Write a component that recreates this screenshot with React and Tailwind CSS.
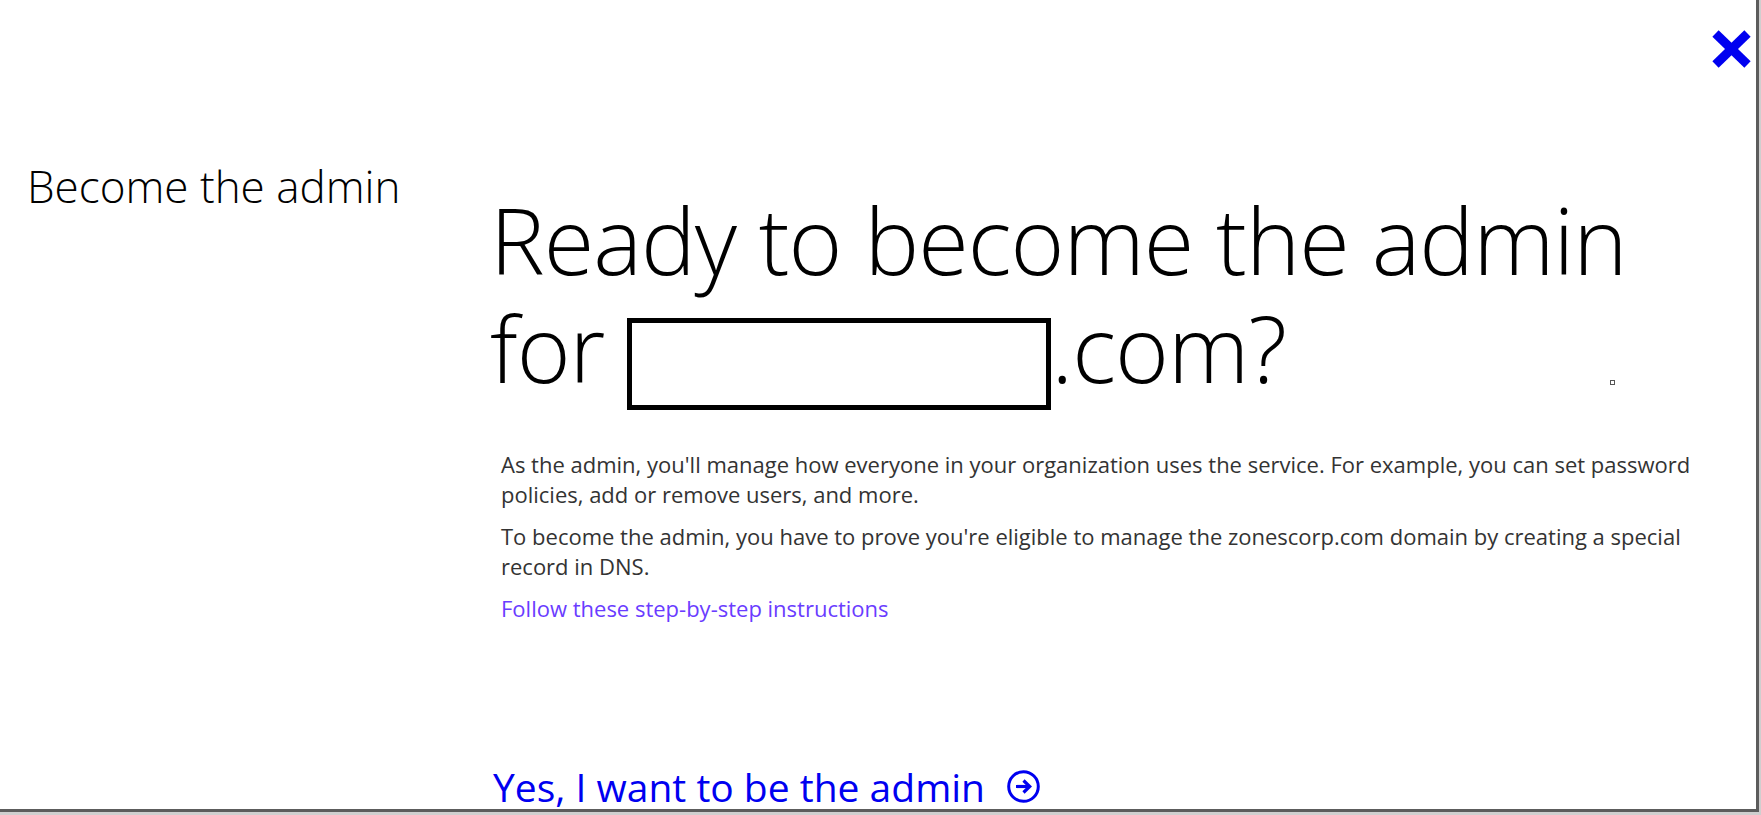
import React from "react";

const CloseIcon = () => (
  <svg width="39" height="38" viewBox="0 0 39 38" fill="none">
    <line x1="3.5" y1="3.5" x2="35.5" y2="34.5" stroke="#0000f0" strokeWidth="9" />
    <line x1="35.5" y1="3.5" x2="3.5" y2="34.5" stroke="#0000f0" strokeWidth="9" />
  </svg>
);

const ArrowCircle = () => (
  <svg width="33" height="33" viewBox="0 0 33 33" fill="none">
    <circle cx="16.5" cy="16.5" r="14.8" stroke="#0000f0" strokeWidth="3" />
    <path d="M9 16.5h13" stroke="#0000f0" strokeWidth="3.2" />
    <path d="M16.5 10.5l6.2 6-6.2 6" stroke="#0000f0" strokeWidth="3.2" />
  </svg>
);

const App = () => {
  return (
    <div className="w-[1761px] h-[815px] bg-[#cfcfcf] overflow-hidden font-['Open_Sans',sans-serif]">
      <div className="relative w-[1759px] h-[812px] bg-white border-r-[3px] border-b-[3px] border-[#5c5c5c] flex">
        {/* close button */}
        <button className="absolute top-[30px] right-[5px]">
          <CloseIcon />
        </button>

        {/* left title */}
        <div className="w-[490px] shrink-0 pl-[27px] pt-[164px]">
          <h2 className="text-[44px] leading-none font-light text-black">Become the admin</h2>
        </div>

        {/* main */}
        <div className="relative flex-1 flex flex-col">
          <h1 className="mt-[186px] text-[92px] leading-[108px] font-light text-black tracking-[-1px]">
            Ready to become the admin
            <br />
            for{" "}
            <span className="inline-block w-[424px] h-[92px] -mb-[20px] border-[5px] border-black align-[-7px]"></span>
            .com?
          </h1>
          <span className="absolute left-[1120px] top-[380px] w-[5px] h-[5px] border border-[#555]"></span>

          <div className="mt-[47px] pl-[11px] text-[22px] leading-[30px] text-[#333]">
            <p className="mb-3">
              As the admin, you'll manage how everyone in your organization uses the service. For example, you can set password
              <br />
              policies, add or remove users, and more.
            </p>
            <p className="mb-3">
              To become the admin, you have to prove you're eligible to manage the zonescorp.com domain by creating a special
              <br />
              record in DNS.
            </p>
            <a href="#" className="text-[#6a3cff]">
              Follow these step-by-step instructions
            </a>
          </div>

          <button className="mt-[144px] ml-[3px] flex items-center gap-[22px] text-[39px] leading-none text-[#0000f0]">
            <span>Yes, I want to be the admin</span>
            <ArrowCircle />
          </button>
        </div>
      </div>
    </div>
  );
};

export default App;
